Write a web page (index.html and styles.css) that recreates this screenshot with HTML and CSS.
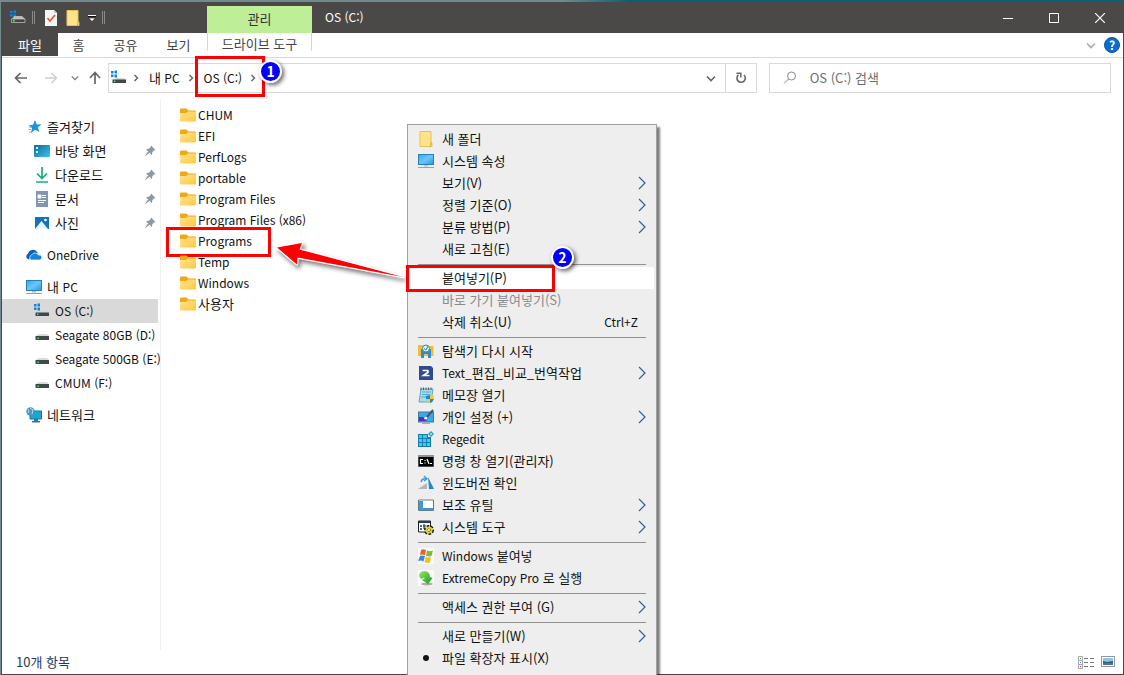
FILE: index.html
```html
<!DOCTYPE html>
<html lang="ko">
<head>
<meta charset="utf-8">
<meta name="viewport" content="width=device-width, initial-scale=1">
<title>OS (C:)</title>
<link rel="stylesheet" href="styles.css">
</head>
<body>
<svg class="defs" aria-hidden="true">
  <defs>
    <linearGradient id="gFolder" x1="0" y1="0" x2="1" y2="1"><stop offset="0" stop-color="#ffe393"/><stop offset="1" stop-color="#ffc93c"/></linearGradient>
    <linearGradient id="gScreen" x1="0" y1="0" x2="1" y2="1"><stop offset="0" stop-color="#35a4f0"/><stop offset=".5" stop-color="#6cc6fa"/><stop offset="1" stop-color="#2494e6"/></linearGradient>
    <linearGradient id="gDesk" x1="0" y1="0" x2="1" y2="1"><stop offset="0" stop-color="#0c6a9c"/><stop offset="1" stop-color="#3cc3e6"/></linearGradient>
    <linearGradient id="gGreen" x1="0" y1="0" x2="1" y2="1"><stop offset="0" stop-color="#9be86a"/><stop offset="1" stop-color="#119a1c"/></linearGradient>
  </defs>
  <symbol id="folder" viewBox="0 0 16 14"><path d="M0 1.5Q0 .5 1 .5H6.5L8.5 2.500H15Q16 2.500 16 3.500V7H0Z" fill="#f0a915"/><path d="M0 5H6L8 3.500H16V12.500Q16 13.500 15 13.500H1Q0 13.500 0 12.500Z" fill="url(#gFolder)"/></symbol>
  <symbol id="drive" viewBox="0 0 16 16"><path d="M4 7H13L15 9H2Z" fill="#d9dcdf"/><path d="M1.500 9H15V13H1.500Z" fill="#45484a"/><path d="M3.500 10.500H5V12H3.500Z" fill="#37e65a"/></symbol>
  <symbol id="osdrive" viewBox="0 0 16 16"><path d="M0 1H2.500V3.500H0ZM3.500 .5H6V3.500H3.500ZM0 4.500H2.500V7H0ZM3.500 4.500H6V7.500H3.500Z" fill="#0c84dc"/><path d="M5 8H13L15 10H2Z" fill="#d3d6d9"/><path d="M1.500 9.500H15V13H1.500Z" fill="#434648"/><path d="M3 10.500H4.500V12H3Z" fill="#37e65a"/></symbol>
  <symbol id="pc" viewBox="0 0 16 16"><rect x=".5" y="1.500" width="15" height="10" fill="url(#gScreen)" stroke="#2780ba"/><path d="M6 12H10V13.500H6Z" fill="#b3c3cc"/><path d="M0 14.500H16" stroke="#8ba3b7"/></symbol>
  <symbol id="pin" viewBox="0 0 12 12"><path d="M7 .5L11.500 5L9.800 5.500L8.300 7.300L7.800 10L2 4.200L4.800 3.800L6.500 2.200ZM4 6.500L5.500 8L.5 11.500Z" fill="#8c979f"/></symbol>
  <symbol id="more" viewBox="0 0 8 14"><path d="M1 1L7 7L1 13" fill="none" stroke="#2c629d" stroke-width="1.200"/></symbol>
  <symbol id="sep" viewBox="0 0 6 8"><path d="M1.500 1L4.500 4L1.500 7" fill="none" stroke="#6a6a6a" stroke-width="1.500"/></symbol>
  <symbol id="down" viewBox="0 0 10 7"><path d="M1 1.500L5 5.500L9 1.500" fill="none" stroke="currentColor" stroke-width="1.600"/></symbol>
  <symbol id="note" viewBox="0 0 14 16"><path d="M1 .5H12V11L13 12V15.500H1Z" fill="#ffe28a" stroke="#e6c258"/><path d="M12 11V13.500L11 15.500" fill="none" stroke="#d1a23c"/></symbol>
</svg>

<div class="desktop">
<div class="window">
  <header class="titlebar">
    <div class="quick">
      <svg class="i16" viewBox="0 0 16 16" aria-hidden="true"><path d="M0 1H2.500V3H0ZM3.500 .5H6V3H3.500ZM0 4H2.500V6.500H0ZM3.500 4H6V6.500H3.500Z" fill="#0c84dc"/><path d="M4 6H12L15 9H2Z" fill="#bbb"/><path d="M1.500 9H15V12.500H1.500Z" fill="#444" stroke="#ddd" stroke-width=".6"/><path d="M3 10H5V11.500H3Z" fill="#37e65a"/></svg>
      <span class="grip"></span>
      <button class="plain q-check" aria-label="속성"><svg width="12" height="16" viewBox="0 0 12 16"><path d="M0 0H9L12 3V16H0Z" fill="#f5f5f5"/><path d="M9 0V3H12" fill="#ccc"/><path d="M2.500 8L5 11L10 5" fill="none" stroke="#ee5525" stroke-width="1.700"/></svg></button>
      <button class="plain q-new" aria-label="새 폴더"><svg width="14" height="16"><use href="#note"/></svg></button>
      <button class="plain" aria-label="빠른 실행 사용자 지정"><svg width="8" height="8" viewBox="0 0 8 8"><path d="M0 1.500H8" stroke="#fff"/><path d="M0 2.500H8" stroke="#111"/><path d="M.5 4H7.500L4 7.500Z" fill="#fff" stroke="#111" stroke-width=".6"/></svg></button>
      <span class="grip"></span>
    </div>
    <div class="context-head">관리</div>
    <h1 class="title latin">OS (C:)</h1>
    <div class="win-buttons">
      <button class="plain" aria-label="최소화"><svg width="10" height="10" viewBox="0 0 10 10"><path d="M0 5.500H10" stroke="#fff"/></svg></button>
      <button class="plain" aria-label="최대화"><svg width="10" height="10" viewBox="0 0 10 10"><path d="M.5 .5H9.500V9.500H.5Z" fill="none" stroke="#fff"/></svg></button>
      <button class="plain" aria-label="닫기"><svg width="10" height="10" viewBox="0 0 10 10"><path d="M0 0L10 10M10 0L0 10" stroke="#fff" stroke-width="1.200"/></svg></button>
    </div>
  </header>

  <div class="ribbon">
    <button class="tab file">파일</button>
    <button class="tab home">홈</button>
    <button class="tab">공유</button>
    <button class="tab">보기</button>
    <button class="tab drive-tools">드라이브 도구</button>
    <div class="ribbon-end">
      <button class="plain faint" aria-label="리본 확장"><svg width="10" height="7"><use href="#down"/></svg></button>
      <button class="help" aria-label="도움말">?</button>
    </div>
  </div>

  <div class="navbar">
    <div class="arrows">
      <button class="plain" aria-label="뒤로"><svg width="14" height="12" viewBox="0 0 14 12"><path d="M13 6H2M6.500 1L1.500 6L6.500 11" fill="none" stroke="#666" stroke-width="1.700"/></svg></button>
      <button class="plain fwd" aria-label="앞으로" disabled><svg width="14" height="12" viewBox="0 0 14 12"><path d="M1 6H12M7.500 1L12.500 6L7.500 11" fill="none" stroke="#d0d0d0" stroke-width="1.500"/></svg></button>
      <button class="plain recent" aria-label="최근 위치"><svg width="8" height="6"><use href="#down"/></svg></button>
      <button class="plain" aria-label="위로"><svg width="12" height="14" viewBox="0 0 12 14"><path d="M6 13V2M1 7L6 1.500L11 7" fill="none" stroke="#666" stroke-width="1.700"/></svg></button>
    </div>
    <div class="address">
      <svg class="i16 addr-icon" aria-hidden="true"><use href="#osdrive"/></svg>
      <svg class="crumb-sep" aria-hidden="true"><use href="#sep"/></svg>
      <button class="plain crumb">내 <span class="latin">&nbsp;PC</span></button>
      <svg class="crumb-sep" aria-hidden="true"><use href="#sep"/></svg>
      <span class="current">
        <button class="plain crumb latin">OS (C:)</button>
        <svg class="crumb-sep" aria-hidden="true"><use href="#sep"/></svg>
        <span class="mark mark-crumb"></span>
        <span class="badge badge-one">1</span>
      </span>
      <button class="plain history" aria-label="이전 위치"><svg width="10" height="7"><use href="#down"/></svg></button>
      <button class="refresh" aria-label="새로 고침"><svg width="12" height="12" viewBox="0 0 12 12"><path d="M9 3A4.200 4.200 0 1 1 3.500 2.800" fill="none" stroke="#666" stroke-width="1.600"/><path d="M1.500 1.300H5.800V5.500" fill="none" stroke="#666" stroke-width="1.500"/></svg></button>
    </div>
    <label class="search">
      <svg width="14" height="14" viewBox="0 0 14 14" aria-hidden="true"><circle cx="8.500" cy="5" r="4" fill="none" stroke="#8b8b8b"/><path d="M5.500 8L1 12.500" stroke="#8b8b8b"/></svg>
      <input type="search" placeholder="OS (C:) 검색" aria-label="OS (C:) 검색">
    </label>
  </div>

  <div class="main">
    <nav class="sidebar" aria-label="탐색 창">
      <div class="group">
        <a class="node" href="#"><svg class="i16" viewBox="0 0 16 16"><path d="M9 1L10.800 5.500L15.500 5.200L11.800 8.500L13.500 13L9 10.800L5 14L6 9L2.500 6.500L7 5.800Z" fill="#1f8fdf"/><path d="M3 8H6M2.500 10.500H5M3 13H5" stroke="#66b8ee"/></svg>즐겨찾기</a>
        <a class="node sub" href="#"><svg class="i16" viewBox="0 0 16 16"><rect y="2" width="16" height="12" rx="1" fill="url(#gDesk)"/><path d="M2 4H4V6H2ZM2 8H4V10H2Z" fill="#cdf2fa"/></svg>바탕 화면<svg class="pin"><use href="#pin"/></svg></a>
        <a class="node sub" href="#"><svg class="i16" viewBox="0 0 16 16"><path d="M8 0V11M3 6.500L8 11.500L13 6.500M2 15H14" fill="none" stroke="#18ad83" stroke-width="1.700"/></svg>다운로드<svg class="pin"><use href="#pin"/></svg></a>
        <a class="node sub" href="#"><svg class="i16" viewBox="0 0 16 16"><path d="M2 0H14V16H2Z" fill="#8296b3"/><path d="M4 4H7V7H4ZM8 4.500H12M8 6.500H12M4 9.500H12M4 11.500H10" fill="#fff" stroke="#fff"/></svg>문서<svg class="pin"><use href="#pin"/></svg></a>
        <a class="node sub" href="#"><svg class="i16" viewBox="0 0 16 16"><path d="M1 2H15V14H1Z" fill="#1572bd"/><path d="M1 14L7.500 6L14 14Z" fill="#e9f6ff"/><circle cx="11.500" cy="5" r="1.300" fill="#fff"/></svg>사진<svg class="pin"><use href="#pin"/></svg></a>
      </div>
      <div class="group">
        <a class="node" href="#"><svg class="i16" viewBox="0 0 16 16"><path d="M3 12.500A3 3 0 0 1 2 6.800A5 5 0 0 1 11 5L12 6L4.500 11Z" fill="#0a62b4"/><path d="M5 13A2.800 2.800 0 0 1 5.500 8A4 4 0 0 1 12.500 8A2.600 2.600 0 0 1 14 13Z" fill="#1683dc" stroke="#fff" stroke-width=".7"/></svg><span class="latin">OneDrive</span></a>
      </div>
      <div class="group">
        <a class="node" href="#"><svg class="i16"><use href="#pc"/></svg><span>내 <span class="latin">PC</span></span></a>
        <a class="node sub selected latin" href="#" aria-current="true"><svg class="i16"><use href="#osdrive"/></svg>OS (C:)</a>
        <a class="node sub latin" href="#"><svg class="i16"><use href="#drive"/></svg>Seagate 80GB (D:)</a>
        <a class="node sub latin" href="#"><svg class="i16"><use href="#drive"/></svg>Seagate 500GB (E:)</a>
        <a class="node sub latin" href="#"><svg class="i16"><use href="#drive"/></svg>CMUM (F:)</a>
      </div>
      <div class="group">
        <a class="node" href="#"><svg class="i16" viewBox="0 0 16 16"><path d="M4 4H15.500V12H4Z" fill="#1da6d6" stroke="#1775a6"/><path d="M8 12H12V14H14V15.500H6V14H8Z" fill="#2879a5"/><circle cx="4.500" cy="4.500" r="4.200" fill="#4a93c4"/><path d="M2 2Q4 4 2 6M4 1L7 3L6 7" fill="none" stroke="#b8e2f3"/></svg>네트워크</a>
      </div>
    </nav>

    <main class="files">
      <a class="entry latin" href="#"><svg class="fold"><use href="#folder"/></svg>CHUM</a>
      <a class="entry latin" href="#"><svg class="fold"><use href="#folder"/></svg>EFI</a>
      <a class="entry latin" href="#"><svg class="fold"><use href="#folder"/></svg>PerfLogs</a>
      <a class="entry latin" href="#"><svg class="fold"><use href="#folder"/></svg>portable</a>
      <a class="entry latin" href="#"><svg class="fold"><use href="#folder"/></svg>Program Files</a>
      <a class="entry latin" href="#"><svg class="fold"><use href="#folder"/></svg>Program Files (x86)</a>
      <a class="entry latin" href="#"><svg class="fold"><use href="#folder"/></svg>Programs<span class="mark mark-entry"></span></a>
      <a class="entry latin" href="#"><svg class="fold"><use href="#folder"/></svg>Temp</a>
      <a class="entry latin" href="#"><svg class="fold"><use href="#folder"/></svg>Windows</a>
      <a class="entry" href="#"><svg class="fold"><use href="#folder"/></svg>사용자</a>
    </main>
  </div>

  <footer class="status">
    <span>10개 항목</span>
    <div class="views">
      <button class="plain" aria-label="자세히"><svg width="16" height="13" viewBox="0 0 16 13"><path d="M.5 .5H4.500V12.500H.5ZM.5 4.500H4.500M.5 8.500H4.500" fill="none" stroke="#aaa"/><path d="M6 2.500H10M12 2.500H16M6 6.500H10M12 6.500H16M6 10.500H10M12 10.500H16" stroke="#777"/><path d="M2 2H3V3H2Z" fill="#3a3"/><path d="M2 6H3V7H2Z" fill="#28d"/><path d="M2 10H3V11H2Z" fill="#e23"/></svg></button>
      <button class="plain" aria-label="큰 아이콘"><svg width="14" height="12" viewBox="0 0 14 12"><rect x=".5" y=".5" width="13" height="10" fill="#fff" stroke="#999"/><path d="M2 2H12V9H2Z" fill="#8cc4ef"/><path d="M2 5L6 6L12 5V7H2Z" fill="#395f62"/><path d="M2 7H12V9H2Z" fill="#3f79bd"/></svg></button>
    </div>
  </footer>
</div>

<div class="menu" role="menu">
  <button class="item" role="menuitem"><svg class="ico"><use href="#note"/></svg>새 폴더</button>
  <button class="item" role="menuitem"><svg class="ico"><use href="#pc"/></svg>시스템 속성</button>
  <button class="item" role="menuitem"><span class="ico"></span>보기(V)<svg class="more"><use href="#more"/></svg></button>
  <button class="item" role="menuitem"><span class="ico"></span>정렬 기준(O)<svg class="more"><use href="#more"/></svg></button>
  <button class="item" role="menuitem"><span class="ico"></span>분류 방법(P)<svg class="more"><use href="#more"/></svg></button>
  <button class="item" role="menuitem"><span class="ico"></span>새로 고침(E)</button>
  <hr>
  <button class="item hot" role="menuitem"><span class="ico"></span>붙여넣기(P)<span class="mark mark-item"></span><span class="badge badge-two">2</span></button>
  <button class="item" role="menuitem" disabled><span class="ico"></span>바로 가기 붙여넣기(S)</button>
  <button class="item" role="menuitem"><span class="ico"></span>삭제 취소(U)<span class="key latin">Ctrl+Z</span></button>
  <hr>
  <button class="item" role="menuitem"><svg class="ico" viewBox="0 0 16 16"><path d="M0 2H5L6 3H15.500V13H0Z" fill="#f2bd35"/><path d="M3 6H13V15H10V11H6V15H3Z" fill="#2d8cd0"/><circle cx="8" cy="5.500" r="3.500" fill="#d8f2f8" stroke="#388db2"/><path d="M6 5.500L8 7L10 3" fill="none" stroke="#1c93bb"/></svg>탐색기 다시 시작</button>
  <button class="item" role="menuitem"><svg class="ico" viewBox="0 0 16 16"><path d="M1 1H13L15 3V15H1Z" fill="#2f4a8d"/><path d="M4.500 5.500H9.500Q11 6.800 9 8L5.500 10.500H11.500" fill="none" stroke="#fff" stroke-width="1.700"/></svg><span><span class="latin">Text_</span>편집_비교_번역작업</span><svg class="more"><use href="#more"/></svg></button>
  <button class="item" role="menuitem"><svg class="ico" viewBox="0 0 16 16"><path d="M3 2H15L13 15H1Z" fill="#a6dcf0" stroke="#67a4bb"/><path d="M4 5H13M4 7.500H12M3 10H11" stroke="#5bafce"/><path d="M3 .5V3M5.500 .5V3M8 .5V3M10.500 .5V3M13 .5V3" stroke="#555"/><path d="M8 9L12 8L16 9V12Q15 15 12 16Q9 15 8 12Z" fill="#f6cd24"/><path d="M12 8V12H8V9ZM12 12H16Q15 15 12 16Z" fill="#2187d2"/></svg>메모장 열기</button>
  <button class="item" role="menuitem"><svg class="ico" viewBox="0 0 16 16"><rect x=".5" y="3" width="15" height="10" fill="#38a9ed" stroke="#427892"/><path d="M1 8H5L9 12H1Z" fill="#5526c8"/><path d="M6 10Q7 7 9 8Q10 11 6 10Z" fill="#fff"/><path d="M9 8L15 1" stroke="#456" stroke-width="2"/><path d="M4 14.500H12" stroke="#aaa"/></svg>개인 설정 (+)<svg class="more"><use href="#more"/></svg></button>
  <button class="item" role="menuitem"><svg class="ico" viewBox="0 0 16 16"><path d="M0 3H10V6H13V16H0Z" fill="#167fb2"/><path d="M1 4H4V7H1ZM5 4H9V7H5ZM1 8H4V11H1ZM5 8H8V11H5ZM9 8H12V11H9ZM1 12H4V15H1ZM5 12H8V15H5ZM9 12H12V15H9Z" fill="#49c5ed"/><path d="M13 0L16 3L13 6L10 3Z" fill="#2e9dcc"/><path d="M12 2H14V4H12Z" fill="#83def4"/></svg><span class="latin">Regedit</span></button>
  <button class="item" role="menuitem"><svg class="ico" viewBox="0 0 16 16"><path d="M0 2H16V14H0Z" fill="#8b9398"/><path d="M.5 4H15.500V13.500H.5Z" fill="#000"/><path d="M5 6.500H2.500V10.500H5M7 7V8M7 9.500V10.500M9 6L11 11M12 10.500H14" fill="none" stroke="#fff" stroke-width="1.200"/></svg>명령 창 열기(관리자)</button>
  <button class="item" role="menuitem"><svg class="ico" viewBox="0 0 16 16"><path d="M10 2L16 14H11Z" fill="#2388cf"/><path d="M0 14L9 8V14Z" fill="#b5b5b5"/><path d="M3 7Q4 3 8 4M6 1L9 4L6 6" fill="none" stroke="#4799d3" stroke-width="1.400"/></svg>윈도버전 확인</button>
  <button class="item" role="menuitem"><svg class="ico" viewBox="0 0 16 16"><path d="M.5 3H15.500V13.500H.5Z" fill="#fff" stroke="#667c8b"/><path d="M1 4H5V11H15V13H1Z" fill="#3b9ad6"/></svg>보조 유틸<svg class="more"><use href="#more"/></svg></button>
  <button class="item" role="menuitem"><svg class="ico" viewBox="0 0 16 16"><path d="M.5 2H12.500V13H.5Z" fill="#fff" stroke="#222"/><path d="M1 2H12V4H1Z" fill="#20398c"/><path d="M2 6H4V8H2ZM2 9H4V11H2Z" fill="#2c74ac"/><path d="M5 7H8M6 5V10" stroke="#222"/><circle cx="11" cy="11" r="3" fill="none" stroke="#111" stroke-width="4" stroke-dasharray="2 1"/><circle cx="11" cy="11" r="2.600" fill="none" stroke="#e5ce26" stroke-width="2"/></svg>시스템 도구<svg class="more"><use href="#more"/></svg></button>
  <hr>
  <button class="item" role="menuitem"><svg class="ico" viewBox="0 0 16 16"><path d="M0 0H16V16H0Z" fill="#fafafa"/><path d="M3 2Q5 .5 8 2L7 7Q4 6 2 7Z" fill="#ec6423"/><path d="M9 2.500Q12 4 15 2.500L13.500 8Q11 9 8 7.500Z" fill="#81b83b"/><path d="M2 8Q4 7 7 8L5.500 13.500Q3 12 0 13Z" fill="#358cda"/><path d="M8 8.500Q10 10 13 9L12 14.500Q9 15.500 6.500 14Z" fill="#f4bd22"/></svg><span><span class="latin">Windows</span> 붙여넣</span></button>
  <button class="item" role="menuitem"><svg class="ico" viewBox="0 0 16 16"><path d="M0 0H16V16H0Z" fill="#fafafa"/><ellipse cx="9" cy="14" rx="6" ry="1.500" fill="#aaa"/><path d="M1 5Q2 1 7 1Q12 2 12 7L14.500 8L10 14L4 10L7 8Q5 7 4 9Q1 8 1 5Z" fill="url(#gGreen)"/></svg><span><span class="latin">ExtremeCopy Pro</span> 로 실행</span></button>
  <hr>
  <button class="item" role="menuitem"><span class="ico"></span>액세스 권한 부여 (G)<svg class="more"><use href="#more"/></svg></button>
  <hr>
  <button class="item" role="menuitem"><span class="ico"></span>새로 만들기(W)<svg class="more"><use href="#more"/></svg></button>
  <button class="item" role="menuitemcheckbox" aria-checked="true"><span class="ico dot"></span>파일 확장자 표시(X)</button>
</div>

<svg class="pointer" viewBox="0 0 144 48" aria-hidden="true"><path d="M7 12.500L32 8L29.500 14.500L133 42L27.500 22.500L27 29.500Z" fill="#f00" stroke="#fff" stroke-width="2.500" stroke-linejoin="round" paint-order="stroke"/></svg>
</div>
</body>
</html>
```

FILE: styles.css
```css
* { box-sizing: border-box; }

body {
  margin: 0;
  font: 13px/20px "Noto Sans CJK KR", "Noto Sans", sans-serif;
  color: #111;
  background: #1b5262;
}

button, input { font: inherit; color: inherit; }
a { color: inherit; text-decoration: none; }
svg { display: block; flex: none; }
.defs { position: absolute; width: 0; height: 0; }
.latin { font-size: 12px; }

.desktop {
  position: relative;
  height: 100vh;
  padding: 2px 0 0 1px;
  overflow: hidden;
  background: linear-gradient(90deg, #718b8d, #718b8d 50%, #0d5e71 56%);
}

.window {
  display: flex;
  flex-direction: column;
  height: 100%;
  border: 1px solid #4a4846;
  border-top: 0;
  background: #fff;
}

.plain {
  display: flex;
  align-items: center;
  padding: 0;
  border: 0;
  background: none;
}

.i16 { width: 16px; height: 16px; }

/* Title bar */
.titlebar {
  display: flex;
  flex: none;
  height: 31px;
  color: #fff;
  background: #4b4947;
}
.quick {
  display: flex;
  align-items: center;
  width: 205px;
  padding-left: 8px;
}
.grip {
  width: 3px;
  height: 13px;
  margin-left: 6px;
  border: solid #8b8a88;
  border-width: 0 1px;
}
.q-check { margin-left: 10px; }
.q-new { margin: 0 8px 0 9px; }
.context-head {
  width: 105px;
  margin-top: 4px;
  line-height: 26px;
  text-align: center;
  color: #333;
  background: #bfee99;
}
.title {
  flex: 1;
  margin: 0 0 0 13px;
  font-weight: 400;
  line-height: 30px;
}
.win-buttons { display: flex; }
.win-buttons .plain {
  justify-content: center;
  width: 46px;
}

/* Ribbon tabs */
.ribbon {
  display: flex;
  flex: none;
  height: 25px;
  border-bottom: 1px solid #d9d9d9;
  color: #444;
}
.tab {
  width: 53px;
  height: 23px;
  padding: 0;
  border: 0;
  line-height: 22px;
  background: none;
}
.file { width: 56px; color: #fff; background: #4b4947; }
.home { width: 41px; }
.drive-tools {
  width: 105px;
  height: 18px;
  margin-left: 2px;
  border: solid #d5d5d5;
  border-width: 0 1px;
}
.ribbon-end {
  display: flex;
  align-items: center;
  gap: 8px;
  margin-left: auto;
  padding-right: 3px;
}
.faint { color: #aaa; }
.help {
  width: 16px;
  height: 16px;
  padding: 0;
  border: 1px solid #0b55a4;
  border-radius: 50%;
  font-size: 12px;
  font-weight: 700;
  line-height: 14px;
  color: #fff;
  background: #0a6bd0;
}

/* Address row */
.navbar {
  display: flex;
  flex: none;
  gap: 12px;
  padding: 5px 12px 6px 12px;
}
.arrows {
  display: flex;
  align-items: center;
  width: 82px;
  color: #777;
}
.fwd { margin: 0 13px 0 16px; }
.recent { margin-right: 10px; }
.address, .search {
  display: flex;
  align-items: center;
  height: 30px;
  border: 1px solid #d9d9d9;
}
.address { flex: 19 1 0; }
.addr-icon { margin: 0 6px 0 2px; }
.crumb-sep { width: 6px; height: 8px; }
.address .crumb { margin: 0 8px 0 10px; }
.current { position: relative; display: flex; align-items: center; }
.history { margin: 0 9px 0 auto; color: #666; }
.refresh {
  display: flex;
  align-items: center;
  justify-content: center;
  width: 31px;
  height: 28px;
  padding: 0;
  border: 0;
  border-left: 1px solid #d9d9d9;
  background: none;
}
.search { flex: 10 1 0; }
.search svg { margin: 0 13px; }
.search input {
  flex: 1;
  min-width: 0;
  padding: 0;
  border: 0;
  outline: 0;
  background: none;
}
.search input::placeholder { color: #6d6d6d; opacity: 1; }

/* Folder tree and file list */
.main { display: flex; flex: 1; min-height: 0; }
.sidebar {
  width: 159px;
  padding-top: 16px;
  border-right: 1px solid #f0f0f0;
}
.group { margin-bottom: 8px; }
.node {
  display: flex;
  align-items: center;
  gap: 5px;
  height: 24px;
  margin-right: 2px;
  padding-left: 24px;
  white-space: nowrap;
}
.sub { padding-left: 32px; }
.selected { background: #d9d9d9; }
.pin { width: 12px; height: 12px; margin: 0 2px 0 auto; }

.files { flex: 1; padding: 5px 0 0 19px; }
.entry {
  position: relative;
  display: flex;
  align-items: center;
  gap: 2px;
  width: max-content;
  height: 21px;
}
.fold { width: 16px; height: 14px; }

.status {
  display: flex;
  flex: none;
  align-items: center;
  justify-content: space-between;
  height: 24px;
  padding: 0 8px 0 14px;
  color: #1e395b;
}
.views { display: flex; align-items: center; gap: 7px; }

/* Context menu */
.menu {
  position: absolute;
  top: 124px;
  left: 407px;
  width: 250px;
  height: 600px;
  padding: 3px 2px;
  border: 1px solid #a0a0a0;
  background: #eee;
  box-shadow: 3px 3px 2px rgba(0, 0, 0, .5);
}
.item {
  position: relative;
  display: flex;
  align-items: center;
  gap: 8px;
  width: 100%;
  height: 22px;
  padding: 0 8px;
  border: 0;
  line-height: 22px;
  text-align: left;
  white-space: nowrap;
  background: none;
}
.item:disabled { color: #8a8a8a; }
.hot { background: #fff; }
.ico { flex: none; width: 16px; height: 16px; }
.more { width: 8px; height: 14px; margin-left: auto; }
.key { margin: 0 8px 0 auto; }
.dot::before {
  content: "";
  display: block;
  width: 6px;
  height: 6px;
  margin: 5px;
  border-radius: 50%;
  background: #111;
}
.menu hr {
  height: 1px;
  margin: 4px 8px 2px;
  border: 0;
  background: #919191;
}

/* Step annotations */
.mark { position: absolute; border: 3px solid #f00; pointer-events: none; }
.mark-crumb { inset: -12px -9px -9px 1px; }
.mark-entry { inset: -3px -19px -6px -14px; }
.mark-item { top: -2px; left: -4px; width: 149px; height: 27px; }
.badge {
  position: absolute;
  width: 23px;
  height: 23px;
  border: 2px solid #fff;
  border-radius: 50%;
  font-size: 14px;
  font-weight: 700;
  line-height: 19px;
  text-align: center;
  color: #fff;
  background: #00f;
  box-shadow: 2px 2px 4px rgba(0, 0, 0, .6);
}
.badge-one { top: -8px; right: -26px; }
.badge-two { top: -21px; left: 141px; }
.pointer {
  position: absolute;
  top: 235px;
  left: 270px;
  width: 144px;
  height: 48px;
  pointer-events: none;
  filter: drop-shadow(2px 3px 2px rgba(0, 0, 0, .5));
}
```
